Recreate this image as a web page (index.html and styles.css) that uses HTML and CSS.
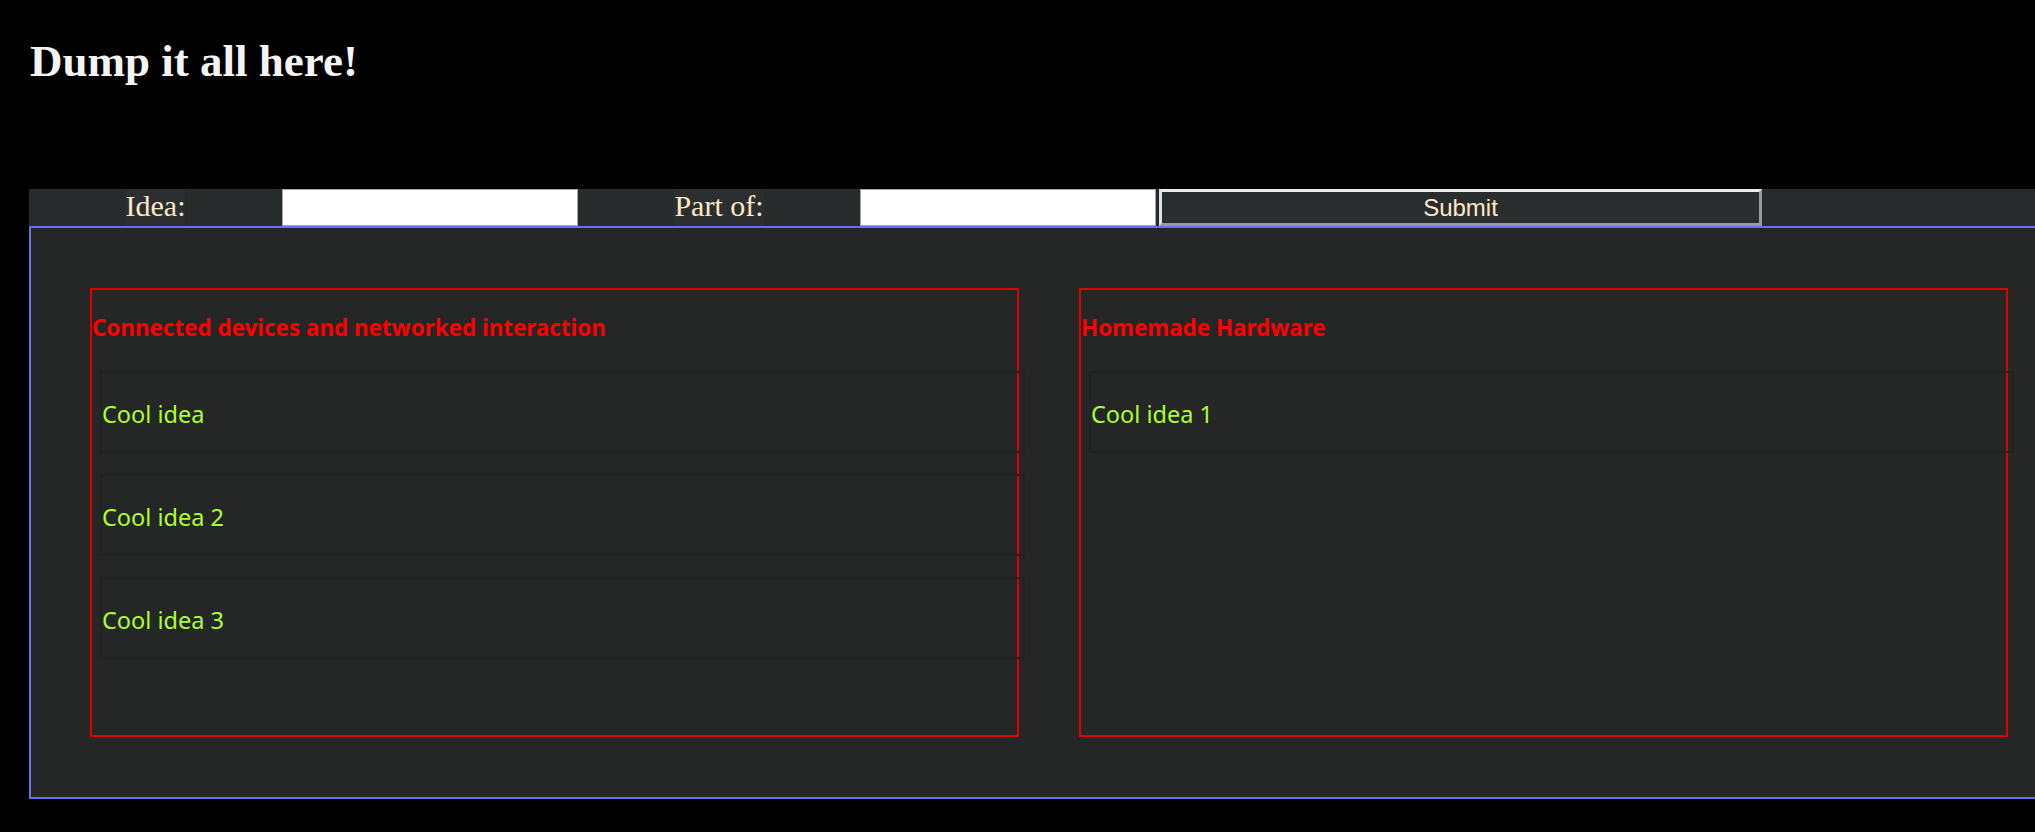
FILE: index.html
```html
<!DOCTYPE html>
<html lang="en">
<head>
<meta charset="utf-8">
<title>Dump it all here!</title>
<link rel="stylesheet" href="styles.css">
</head>
<body>
<header class="top">
  <h1 class="title">Dump it all here!</h1>
</header>
<form class="bar" onsubmit="return false">
  <label class="cell cell-idea"><span class="lbl">Idea:</span></label>
  <input class="field" type="text">
  <label class="cell cell-part"><span class="lbl">Part of:</span></label>
  <input class="field" type="text">
  <button class="submit" type="submit">Submit</button>
  <div class="bar-rest"></div>
</form>
<main class="board">
  <section class="card">
    <h2 class="card-title">Connected devices and networked interaction</h2>
    <div class="item">Cool idea</div>
    <div class="item">Cool idea 2</div>
    <div class="item">Cool idea 3</div>
  </section>
  <section class="card">
    <h2 class="card-title">Homemade Hardware</h2>
    <div class="item">Cool idea 1</div>
  </section>
</main>
</body>
</html>
```
FILE: styles.css
```css
html {
  overflow-x: hidden;
  background: #000;
}
body {
  margin: 0;
  background: #000;
  font-family: "Noto Sans", "Open Sans", sans-serif;
}
.top {
  padding: 35px 0 0 30px;
}
.title {
  margin: 0;
  font-family: "Liberation Serif", "Times New Roman", serif;
  font-weight: bold;
  font-size: 45px;
  line-height: 52px;
  color: #f4f4f4;
}
.bar {
  margin: 102px 0 0 29px;
  height: 37px;
  display: flex;
  background: #282b2c;
}
.cell {
  display: flex;
  justify-content: center;
  height: 37px;
  flex: 0 0 auto;
}
.cell-idea { width: 253px; }
.cell-part { width: 282px; }
.lbl {
  display: block;
  height: 37px;
  background: #2b2f30;
  font-family: "Liberation Serif", "Times New Roman", serif;
  font-size: 30px;
  line-height: 34px;
  color: #ffe8c8;
}
.field {
  flex: 0 0 296px;
  width: 296px;
  height: 37px;
  box-sizing: border-box;
  margin: 0;
  padding: 0 4px;
  border: 1px solid #a6a6a6;
  background: #fff;
  font-size: 16px;
}
.submit {
  flex: 0 0 603px;
  width: 603px;
  height: 37px;
  box-sizing: border-box;
  margin: 0 0 0 3px;
  padding: 0;
  border-style: solid;
  border-width: 3px;
  border-color: #ececec #9a9a9a #9a9a9a #e0e0e0;
  background: #2a2d2e;
  font-family: "Liberation Sans", Arial, sans-serif;
  font-size: 24px;
  color: #ffe8c8;
}
.bar-rest {
  flex: 1 1 auto;
  background: #28292a;
}
.board {
  margin-left: 29px;
  width: 2040px;
  box-sizing: border-box;
  border: 2px solid #6670f0;
  padding: 60px 60px 60px 59px;
  display: flex;
  gap: 60px;
  background: #252626;
}
.card {
  flex: 0 0 929px;
  width: 929px;
  height: 449px;
  box-sizing: border-box;
  border: 2px solid #e00000;
}
.card-title {
  margin: 23px 0 28px;
  font-family: "Noto Sans", "Open Sans", sans-serif;
  font-weight: bold;
  font-size: 22.4px;
  line-height: 30px;
  color: #ff0000;
}
.item {
  margin: 0 0 21px 8px;
  width: 925px;
  height: 82px;
  box-sizing: border-box;
  border: 2px solid #212222;
  padding-top: 26px;
  font-size: 23.5px;
  line-height: 30px;
  color: #adff2f;
}
```
